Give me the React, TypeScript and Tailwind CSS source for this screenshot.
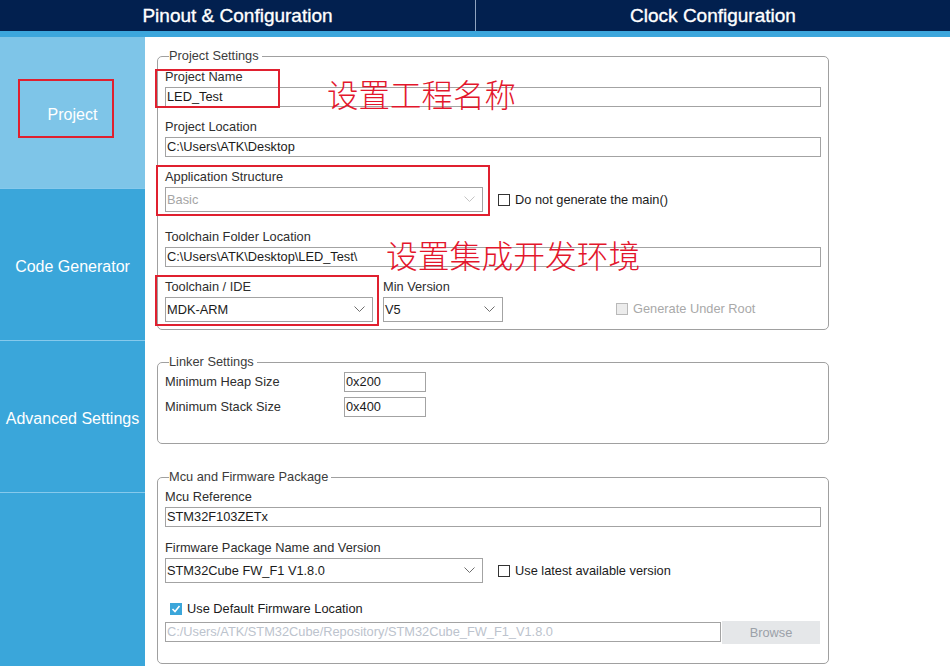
import React from 'react';

const Chevron = ({ color = '#6e6e6e' }: { color?: string }) => (
  <svg width="11" height="7" viewBox="0 0 11 7" fill="none">
    <polyline points="0.5,0.5 5.5,5.5 10.5,0.5" stroke={color} strokeWidth="1" />
  </svg>
);

const TextBox = ({ value, className = '', muted = false }: { value: string; className?: string; muted?: boolean }) => (
  <div
    className={`h-[20px] border border-[#a3a3a3] bg-white pl-px text-[12.8px] leading-[18px] whitespace-nowrap overflow-hidden ${
      muted ? 'text-[#bcc3cd]' : 'text-[#1b1b1b]'
    } ${className}`}
  >
    {value}
  </div>
);

const Select = ({ value, className = '', disabled = false }: { value: string; className?: string; disabled?: boolean }) => (
  <div
    className={`h-[25px] border border-[#a3a3a3] bg-white flex items-center justify-between pl-[1px] pr-[7px] text-[12.8px] ${
      disabled ? 'text-[#a5a5a5]' : 'text-[#1b1b1b]'
    } ${className}`}
  >
    <span>{value}</span>
    <Chevron color={disabled ? '#c4c4c4' : '#6e6e6e'} />
  </div>
);

const Check = ({ checked = false, disabled = false }: { checked?: boolean; disabled?: boolean }) => {
  if (checked) {
    return (
      <span className="w-[12px] h-[12px] bg-[#3ba6da] flex items-center justify-center">
        <svg width="10" height="10" viewBox="0 0 10 10" fill="none">
          <polyline points="1.5,5 4,7.5 8.5,2" stroke="white" strokeWidth="1.6" />
        </svg>
      </span>
    );
  }
  return (
    <span
      className={`w-[12px] h-[12px] border ${disabled ? 'border-[#b9b9b9] bg-[#ececec]' : 'border-[#333] bg-white'}`}
    />
  );
};

const Label = ({ children, className = '' }: { children: React.ReactNode; className?: string }) => (
  <div className={`text-[12.8px] leading-[14px] text-[#2e2e2e] whitespace-nowrap ${className}`}>{children}</div>
);

const Group = ({ title, children, className = '' }: { title: string; children: React.ReactNode; className?: string }) => (
  <fieldset className={`w-[672px] border border-[#a0a0a0] rounded-[5px] px-[7px] ${className}`}>
    <legend className="ml-[4px] pr-[3px] text-[12.8px] leading-[14px] text-[#3c3c3c]">{title}</legend>
    {children}
  </fieldset>
);

const sideItems = [
  { name: 'Project', active: true },
  { name: 'Code Generator', active: false },
  { name: 'Advanced Settings', active: false },
];

export default function App() {
  return (
    <div className="relative w-[950px] h-[666px] overflow-hidden bg-white font-['Liberation_Sans',Arial,sans-serif]">
      {/* top tabs */}
      <div className="flex h-[31px] bg-[#02204f] text-white text-[19px] [-webkit-text-stroke:0.35px_white]">
        <div className="w-[475px] flex items-center justify-center pt-[2px]">Pinout &amp; Configuration</div>
        <div className="flex-1 flex items-center justify-center pt-[2px] border-l border-[#8fa3bf]">Clock Configuration</div>
      </div>
      <div className="h-[6px] bg-[#3ca6dc]" />

      <div className="flex h-[629px]">
        {/* sidebar */}
        <div className="w-[145px] bg-[#3aa6da] flex flex-col">
          {sideItems.map((item) => (
            <div
              key={item.name}
              className={`h-[152px] pt-[4px] flex items-center justify-center text-[16px] text-white border-b border-[#86c9ec] ${
                item.active ? 'bg-[#7ec5e8]' : ''
              }`}
            >
              {item.name}
            </div>
          ))}
        </div>

        {/* main */}
        <div className="flex-1 pl-[12px] pt-[12px]">
          <Group title="Project Settings" className="pb-[7px]">
            <Label className="mt-[7px]">Project Name</Label>
            <TextBox value="LED_Test" className="mt-[3px]" />

            <Label className="mt-[13px]">Project Location</Label>
            <TextBox value="C:\Users\ATK\Desktop" className="mt-[3px]" />

            <Label className="mt-[13px]">Application Structure</Label>
            <div className="mt-[3px] flex items-center">
              <Select value="Basic" disabled className="w-[318px]" />
              <span className="ml-[15px] flex items-center gap-[5px] text-[12.8px] text-[#1b1b1b]">
                <Check />
                Do not generate the main()
              </span>
            </div>

            <Label className="mt-[18px]">Toolchain Folder Location</Label>
            <TextBox value="C:\Users\ATK\Desktop\LED_Test\" className="mt-[3px]" />

            <div className="mt-[13px] flex items-end">
              <div className="w-[208px]">
                <Label>Toolchain / IDE</Label>
                <Select value="MDK-ARM" className="mt-[3px] h-[24px]" />
              </div>
              <div className="ml-[10px] w-[120px]">
                <Label>Min Version</Label>
                <Select value="V5" className="mt-[3px] h-[24px]" />
              </div>
              <span className="ml-[113px] h-[24px] pb-[2px] flex items-center gap-[5px] text-[12.8px] text-[#a9a9a9]">
                <Check disabled />
                Generate Under Root
              </span>
            </div>
          </Group>

          <Group title="Linker Settings" className="mt-[25px] pb-[26px]">
            <div className="mt-[3px] flex items-center">
              <Label className="w-[179px]">Minimum Heap Size</Label>
              <TextBox value="0x200" className="w-[82px]" />
            </div>
            <div className="mt-[5px] flex items-center">
              <Label className="w-[179px]">Minimum Stack Size</Label>
              <TextBox value="0x400" className="w-[82px]" />
            </div>
          </Group>

          <Group title="Mcu and Firmware Package" className="mt-[26px] pb-[19px]">
            <Label className="mt-[6px]">Mcu Reference</Label>
            <TextBox value="STM32F103ZETx" className="mt-[3px] h-[19px]" />

            <Label className="mt-[14px]">Firmware Package Name and Version</Label>
            <div className="mt-[3px] flex items-center">
              <Select value="STM32Cube FW_F1 V1.8.0" className="w-[318px] h-[24px]" />
              <span className="ml-[15px] flex items-center gap-[5px] text-[12.8px] text-[#1b1b1b]">
                <Check />
                Use latest available version
              </span>
            </div>

            <div className="mt-[19px] ml-[5px] flex items-center gap-[5px] text-[12.8px] leading-[14px] text-[#1b1b1b]">
              <Check checked />
              Use Default Firmware Location
            </div>

            <div className="mt-[5px] flex items-start">
              <TextBox
                value="C:/Users/ATK/STM32Cube/Repository/STM32Cube_FW_F1_V1.8.0"
                muted
                className="w-[556px] mt-px"
              />
              <div className="ml-[1px] w-[98px] h-[23px] bg-[#e5e7e9] flex items-center justify-center text-[12.8px] text-[#9ba1a8]">
                Browse
              </div>
            </div>
          </Group>
        </div>
      </div>

      {/* red annotations drawn over the screenshot */}
      <div className="absolute left-[18px] top-[79px] w-[96px] h-[59px] border-2 border-[#e0202f]" />
      <div className="absolute left-[155px] top-[69px] w-[125px] h-[39px] border-2 border-[#e0202f]" />
      <div className="absolute left-[156px] top-[165px] w-[334px] h-[51px] border-2 border-[#e0202f]" />
      <div className="absolute left-[155px] top-[275px] w-[224px] h-[51px] border-2 border-[#e0202f]" />
      <div className="absolute left-[327px] top-[78px] text-[31.5px] leading-none text-[#e3162c] font-light font-['Noto_Sans_CJK_SC',sans-serif]">
        设置工程名称
      </div>
      <div className="absolute left-[386px] top-[239px] text-[31.8px] leading-none text-[#e3162c] font-light font-['Noto_Sans_CJK_SC',sans-serif]">
        设置集成开发环境
      </div>
    </div>
  );
}
